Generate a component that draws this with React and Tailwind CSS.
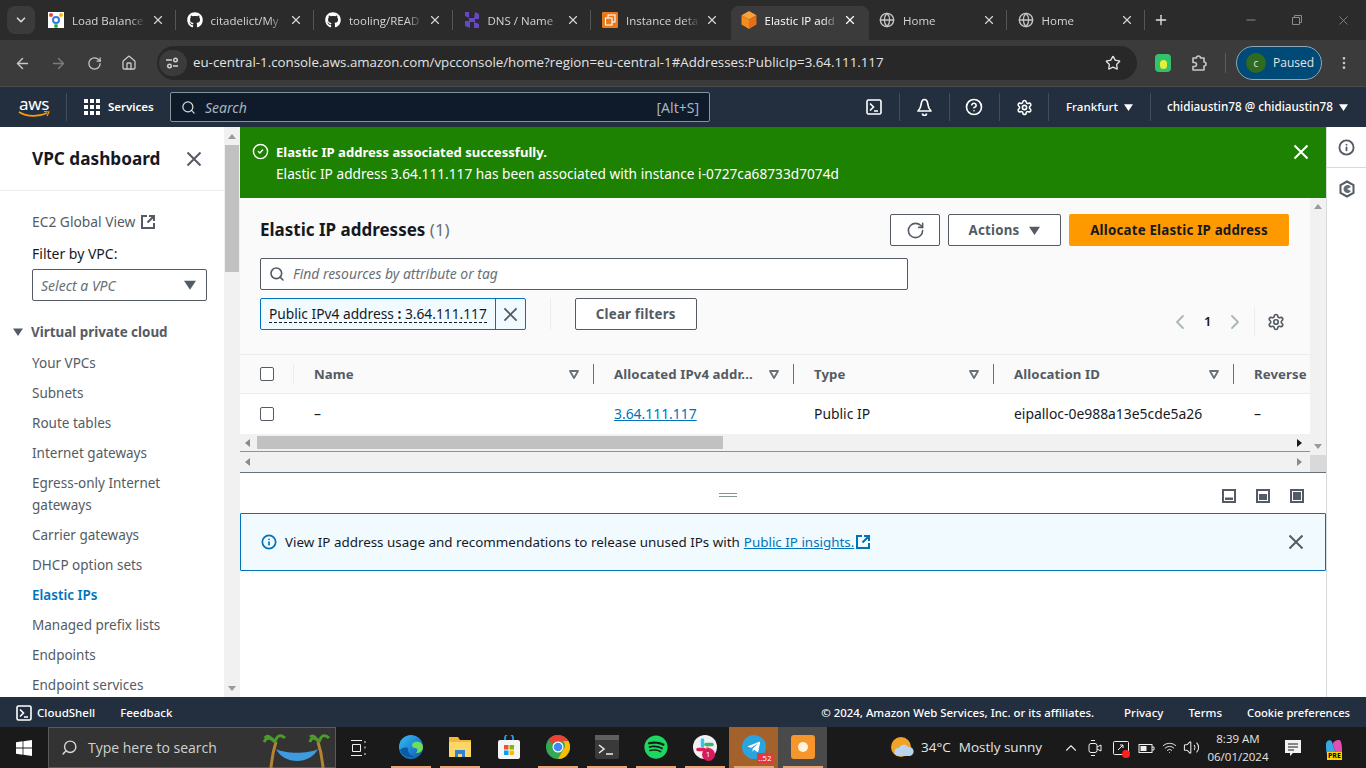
import React from "react"
import {
  ArrowLeft,
  ArrowRight,
  RotateCw,
  Home,
  Star,
  EllipsisVertical,
  Search,
  Settings,
  CircleHelp,
  X,
  Plus,
  Minus,
  Info,
  CircleCheck,
  ChevronLeft,
  ChevronRight,
  ChevronUp,
  ChevronDown,
  Globe,
  Wifi,
  Volume2,
} from "lucide-react"
import { FaGithub, FaSpotify, FaTelegramPlane } from "react-icons/fa"

const sans = "font-['Noto_Sans','Open_Sans',sans-serif]"
const ui = "font-['Open_Sans','Noto_Sans',sans-serif]"

const Caret = ({ className = "", size = 10 }) => (
  <svg width={size} height={size} viewBox="0 0 10 10" className={className}>
    <path d="M0 1.5h10L5 9z" fill="currentColor" />
  </svg>
)

const FilterCaret = () => (
  <svg width="10" height="9" viewBox="0 0 10 9" className="text-[#687078]">
    <path d="M1 1h8L5 8z" fill="none" stroke="currentColor" strokeWidth="1.8" strokeLinejoin="round" />
  </svg>
)

// AWS close glyph, bigger and squarer than the lucide one
const CloseX = ({ className = "", size = 16 }) => (
  <svg width={size} height={size} viewBox="0 0 16 16" fill="none" stroke="currentColor" strokeWidth="2" className={className}>
    <path d="M1.500 1.500l13 13M14.500 1.500l-13 13" />
  </svg>
)

const TerminalBox = ({ size = 16 }) => (
  <svg width={size} height={size} viewBox="0 0 16 16" fill="none" stroke="currentColor" strokeWidth="1.6">
    <rect x="1" y="1" width="14" height="14" rx="1.6" />
    <path d="M4 4.500 7.500 8 4 11.500M8 12h4" />
  </svg>
)

const ExternalBox = ({ className = "" }) => (
  <svg width="14" height="14" viewBox="0 0 14 14" fill="none" stroke="currentColor" strokeWidth="2" className={className}>
    <path d="M6 1H1v12h12V8M8 1h5v5M13 1 6.500 7.500" />
  </svg>
)

const PanelIcon = ({ fill }) => (
  <svg width="14" height="14" viewBox="0 0 14 14">
    <rect x="1" y="1" width="12" height="12" fill="none" stroke="#545b64" strokeWidth="2" />
    <path d={fill} fill="#545b64" />
  </svg>
)

const CubeIcon = () => (
  <svg width="16" height="18" viewBox="0 0 16 18">
    <path d="M8 0 15.500 4.200 8 8.600.5 4.200z" fill="#f9a13a" />
    <path d="M.5 4.200 8 8.600V18L.5 13.600z" fill="#f58a1f" />
    <path d="M15.500 4.200 8 8.600V18l7.500-4.400z" fill="#e2701a" />
  </svg>
)

const InstanceIcon = () => (
  <svg width="16" height="16" viewBox="0 0 16 16">
    <rect width="16" height="16" rx="1" fill="#e8791c" />
    <rect x="6" y="3" width="7" height="7" fill="none" stroke="#fff" strokeWidth="1.1" />
    <rect x="3.500" y="6" width="6.500" height="7" fill="#e8791c" stroke="#fff" strokeWidth="1.1" />
  </svg>
)

const LoadBalancerIcon = () => (
  <svg width="16" height="16" viewBox="0 0 16 16">
    <rect width="16" height="16" fill="#fff" />
    <circle cx="8" cy="8" r="3" fill="none" stroke="#2f7de1" strokeWidth="2" />
    <circle cx="3" cy="3" r="2" fill="#ea4335" />
    <circle cx="13" cy="3" r="2" fill="#fbbc04" />
    <circle cx="8" cy="14" r="2" fill="#34a853" />
  </svg>
)

const HostingerIcon = () => (
  <svg width="16" height="16" viewBox="0 0 16 16" fill="#6747c7">
    <path d="M1 0h4v6L1 4zM11 0l4 2v5h-5zM1 9h5v7L1 14zM10 10l5 2v4h-5z" />
    <path d="M5 6h6v4H5z" />
  </svg>
)

const tabs = [
  { title: "Load Balance", icon: <LoadBalancerIcon />, sep: true },
  { title: "citadelict/My", icon: <FaGithub size={16} className="text-white" />, sep: true },
  { title: "tooling/READ", icon: <FaGithub size={16} className="text-white" />, sep: true },
  { title: "DNS / Name", icon: <HostingerIcon />, sep: true },
  { title: "Instance deta", icon: <InstanceIcon /> },
  { title: "Elastic IP add", icon: <CubeIcon />, active: true },
  { title: "Home", icon: <Globe size={16} className="text-[#c4c7c5]" />, sep: true },
  { title: "Home", icon: <Globe size={16} className="text-[#c4c7c5]" />, sep: true },
]

const TabStrip = () => (
  <div className={`flex h-10 shrink-0 items-center bg-[#2b2b2b] text-[11.5px] text-[#d5d5d5] ${ui}`}>
    <div className="ml-[7px] mr-[3px] flex h-7 w-7 items-center justify-center rounded-lg bg-[#3b3b3b]">
      <ChevronDown size={14} strokeWidth={3} />
    </div>
    {tabs.map((tab, i) => (
      <div
        key={i}
        className={`flex h-[34px] w-[138.5px] shrink-0 items-center self-end rounded-t-lg pb-[6px] pl-[10px] pr-[1px] ${
          tab.active ? "bg-[#3b3b3b] text-white" : ""
        }`}
      >
        <span className="flex w-4 shrink-0 justify-center">{tab.icon}</span>
        <span className="ml-2 h-[17px] w-[74px] overflow-hidden whitespace-nowrap leading-[17px] [mask-image:linear-gradient(90deg,#000_78%,transparent)]">
          {tab.title}
        </span>
        <X size={14} className="ml-auto" strokeWidth={2} />
        <span className={`ml-[10px] h-5 w-px ${tab.sep ? "bg-[#555555]" : ""}`} />
      </div>
    ))}
    <Plus size={16} className="ml-[7px] text-[#e3e3e3]" strokeWidth={2} />
    <Minus size={14} className="ml-[75px] text-[#8a8a8a]" />
    <svg width="12" height="12" viewBox="0 0 12 12" fill="none" stroke="#8a8a8a" className="ml-[33px]">
      <path d="M1.500 3.500h7v7h-7zM3.500 3.500v-2h7v7h-2" />
    </svg>
    <X size={15} className="ml-[33px] text-[#8a8a8a]" strokeWidth={1.4} />
  </div>
)

const Toolbar = () => (
  <div className={`flex h-[47px] shrink-0 items-center border-b border-[#4a4a4a] bg-[#3b3b3b] text-[#c7c7c7] ${ui}`}>
    <ArrowLeft size={17} className="ml-[14px]" />
    <ArrowRight size={17} className="ml-[19px] text-[#7c7c7c]" />
    <RotateCw size={15} className="ml-[20px]" />
    <Home size={16} className="ml-[19px]" />
    <div className="ml-[20px] flex h-[34px] w-[980px] items-center rounded-full bg-[#282828]">
      <div className="ml-[2px] flex h-[26px] w-[28px] items-center justify-center rounded-full bg-[#3b3b3b]">
        <svg width="14" height="12" viewBox="0 0 14 12" fill="none" stroke="#d5d5d5" strokeWidth="1.4">
          <path d="M0 3h6M12 9H7" />
          <circle cx="9.500" cy="3" r="1.800" />
          <circle cx="3.500" cy="9" r="1.800" />
        </svg>
      </div>
      <span className="ml-[6px] whitespace-nowrap text-[13.3px] text-[#e3e3e3]">
        eu-central-1.console.aws.amazon.com/vpcconsole/home?region=eu-central-1#Addresses:PublicIp=3.64.111.117
      </span>
      <Star size={16} className="ml-auto mr-4 text-[#e3e3e3]" />
    </div>
    <div className="ml-[18px] flex h-[18px] w-4 items-end justify-center rounded-sm bg-[#32c26b]">
      <span className="mb-[3px] h-[9px] w-[7px] rounded-full bg-[#e6ee3a]" />
    </div>
    <svg width="17" height="17" viewBox="0 0 17 17" fill="none" stroke="currentColor" strokeWidth="1.6" className="ml-[20px]">
      <path d="M2 3h3.500a2 2 0 0 1 4 0H13v4a2 2 0 0 1 0 4v4H2v-3.500h1.500a2 2 0 0 0 0-4H2z" strokeLinejoin="round" />
    </svg>
    <span className="ml-[17px] h-5 w-px bg-[#5c5c5c]" />
    <div className="ml-[10px] flex h-[34px] w-[86px] items-center rounded-full border border-[#8ea6b8] bg-[#004a77] text-[12px] text-[#e3e3e3]">
      <span className="ml-[9px] flex h-5 w-5 items-center justify-center rounded-full bg-[#2f6b1f] text-[10px]">c</span>
      <span className="ml-[7px]">Paused</span>
    </div>
    <EllipsisVertical size={16} className="ml-[14px]" />
  </div>
)

const NavDivider = ({ className = "" }) => <span className={`h-7 w-px shrink-0 bg-[#414d5c] ${className}`} />

const AwsNav = () => (
  <div className={`flex h-10 shrink-0 items-center bg-[#232f3e] text-[12px] text-white ${sans}`}>
    <div className="ml-[18px] flex w-8 flex-col items-center">
      <span className="text-[17px] leading-[14px] tracking-tight">aws</span>
      <svg width="32" height="7" viewBox="0 0 32 7" fill="none">
        <path d="M1 1c8 5 20 5 28 1" stroke="#f90" strokeWidth="1.6" />
        <path d="M26 .5 31 1l-2 4" stroke="#f90" strokeWidth="1.2" />
      </svg>
    </div>
    <NavDivider className="ml-4" />
    <div className="ml-[17px] grid grid-cols-3 gap-[2px]">
      {[...Array(9)].map((_, i) => (
        <span key={i} className="h-[4px] w-[4px] bg-white" />
      ))}
    </div>
    <span className="ml-2 w-[45px] whitespace-nowrap text-[11.5px] font-semibold">Services</span>
    <div className="ml-[17px] flex h-[30px] w-[540px] items-center rounded-[2px] border border-[#879596] bg-[#0f1b2a] text-[#a9b4bd]">
      <Search size={15} className="ml-[10px] text-[#d5dbdb]" />
      <span className="ml-[9px] text-[14px] italic">Search</span>
      <span className="ml-auto mr-[10px] text-[14px]">[Alt+S]</span>
    </div>
    <span className="ml-[156px] text-white"><TerminalBox /></span>
    <NavDivider className="ml-[17px]" />
    <svg width="17" height="18" viewBox="0 0 17 18" fill="none" stroke="currentColor" strokeWidth="1.7" className="ml-4" strokeLinejoin="round">
      <path d="M8.500 1.500c2 0 3 2 3.300 4.500.3 3 1.200 5 3.200 7H2c2-2 2.900-4 3.200-7 .3-2.500 1.300-4.500 3.300-4.500z" />
      <path d="M6.500 15.500a2 2 0 0 0 4 0" />
    </svg>
    <NavDivider className="ml-4" />
    <CircleHelp size={18} className="ml-[15px]" strokeWidth={2.2} />
    <NavDivider className="ml-4" />
    <Settings size={17} className="ml-4" strokeWidth={2.2} />
    <NavDivider className="ml-[15px]" />
    <span className="ml-[17px] w-[52px] whitespace-nowrap text-[11.6px] font-medium">Frankfurt</span>
    <Caret size={9} className="ml-[6px]" />
    <NavDivider className="ml-[17px]" />
    <span className="ml-4 w-[166px] whitespace-nowrap text-[11.7px] font-medium">chidiaustin78 @ chidiaustin78</span>
    <Caret size={9} className="ml-[6px]" />
  </div>
)

const navItems = [
  "Your VPCs",
  "Subnets",
  "Route tables",
  "Internet gateways",
  "Egress-only Internet gateways",
  "Carrier gateways",
  "DHCP option sets",
  "Elastic IPs",
  "Managed prefix lists",
  "Endpoints",
  "Endpoint services",
]

const ScrollArrow = ({ dir }) => (
  <svg width="8" height="5" viewBox="0 0 8 5" className="text-[#9a9a9a]">
    <path d={dir === "up" ? "M0 5h8L4 0z" : "M0 0h8L4 5z"} fill="currentColor" />
  </svg>
)

const Sidebar = () => (
  <div className="flex w-[240px] shrink-0">
    <div className={`h-full w-[224px] overflow-hidden bg-white text-[13.5px] text-[#545b64] ${sans}`}>
      <div className="flex h-[64px] items-center justify-between border-b border-[#eaeded] pl-8 pr-[22px]">
        <span className="text-[17.2px] font-bold text-[#16191f]">VPC dashboard</span>
        <CloseX className="text-[#545b64]" />
      </div>
      <div className="mt-[21px] flex items-center gap-[6px] pl-8 text-[13.8px] leading-5">
        EC2 Global View <ExternalBox />
      </div>
      <div className="mt-3 pl-8 text-[14px] leading-5 text-[#16191f]">Filter by VPC:</div>
      <div className="ml-8 mt-[5px] flex h-[32px] w-[175px] items-center justify-between rounded-[2px] border border-[#545b64] pl-2 pr-[10px] text-[14px] italic text-[#687078]">
        Select a VPC
        <Caret size={12} className="text-[#545b64]" />
      </div>
      <div className="mt-[21px] flex items-center pl-[13px] text-[13.4px] font-bold leading-5">
        <Caret size={10} />
        <span className="ml-2">Virtual private cloud</span>
      </div>
      <ul className="mt-[10px] flex flex-col gap-2 pl-8 pr-3 leading-[22px]">
        {navItems.map((item) => (
          <li key={item} className={item === "Elastic IPs" ? "font-semibold text-[#0073bb]" : ""}>
            {item}
          </li>
        ))}
      </ul>
    </div>
    <div className="flex h-full w-4 flex-col items-center bg-[#f1f1f1]">
      <div className="flex h-[18px] shrink-0 items-center"><ScrollArrow dir="up" /></div>
      <div className="h-[127px] w-full shrink-0 border-x border-[#f1f1f1] bg-[#c1c1c1]" />
      <div className="mt-auto flex h-[18px] items-center"><ScrollArrow dir="down" /></div>
    </div>
  </div>
)

const Banner = () => (
  <div className={`flex h-[71px] shrink-0 items-start bg-[#1d8102] pl-3 pr-[17px] pt-[14px] text-white ${sans}`}>
    <CircleCheck size={17} className="mt-[2px]" strokeWidth={2} />
    <div className="ml-[7px] flex-1 leading-[22px]">
      <div className="text-[13.1px] font-bold">Elastic IP address associated successfully.</div>
      <div className="text-[13.7px]">Elastic IP address 3.64.111.117 has been associated with instance i-0727ca68733d7074d</div>
    </div>
    <CloseX className="mt-[3px] text-white" />
  </div>
)

const OutlineButton = ({ className = "", children }) => (
  <div className={`flex h-[32px] items-center justify-center rounded-[2px] border border-[#545b64] bg-white pt-[1px] text-[13.300px] font-bold tracking-[0.2px] text-[#545b64] ${className}`}>
    {children}
  </div>
)

const columns = [
  { title: "Name", value: "–", width: "w-[300px]" },
  { title: "Allocated IPv4 addr...", value: "3.64.111.117", link: true, width: "w-[200px]" },
  { title: "Type", value: "Public IP", width: "w-[200px]" },
  { title: "Allocation ID", value: "eipalloc-0e988a13e5cde5a26", width: "w-[240px]" },
  { title: "Reverse", value: "–", width: "w-[200px]", last: true },
]

const Checkbox = () => <span className="h-[14px] w-[14px] rounded-[2px] border border-[#545b64] bg-white" />

const Table = () => (
  <div className="overflow-hidden">
    <div className="mt-6 flex h-[40px] w-[1194px] items-center border-y border-[#eaeded] bg-[#fafafa] text-[13.2px] font-bold tracking-[0.1px] text-[#545b64]">
      <div className="flex h-5 w-[54px] shrink-0 items-center border-r border-[#eaeded] pl-5">
        <Checkbox />
      </div>
      {columns.map((col) => (
        <div
          key={col.title}
          className={`flex h-5 shrink-0 items-center pl-5 pr-[14px] ${col.width} ${col.last ? "" : "border-r border-[#687078]"}`}
        >
          <span className="whitespace-nowrap pt-[2px]">{col.title}</span>
          {col.last ? null : <span className="ml-auto flex"><FilterCaret /></span>}
        </div>
      ))}
    </div>
    <div className="flex h-[40px] w-[1194px] items-center bg-white text-[13.9px] text-[#16191f]">
      <div className="flex h-full w-[54px] shrink-0 items-center pl-5">
        <Checkbox />
      </div>
      {columns.map((col) => (
        <div key={col.title} className={`shrink-0 pl-5 ${col.width} ${col.link ? "text-[#0073bb] underline" : ""}`}>
          {col.value}
        </div>
      ))}
    </div>
  </div>
)

const HScroll = ({ thumb }) => (
  <div className={`flex shrink-0 items-center bg-[#f1f1f1] pl-[5px] pr-[8px] ${thumb ? "h-[17px]" : "h-[20px]"}`}>
    <svg width="5" height="8" viewBox="0 0 5 8" className="text-[#8a8a8a]"><path d="M5 0v8L0 4z" fill="currentColor" /></svg>
    {thumb ? <div className="ml-[7px] h-[13px] w-[466px] bg-[#c1c1c1]" /> : null}
    <svg width="5" height="8" viewBox="0 0 5 8" className={`ml-auto ${thumb ? "text-[#16191f]" : "text-[#8a8a8a]"}`}><path d="M0 0v8l5-4z" fill="currentColor" /></svg>
  </div>
)

const Panel = () => (
  <div className="flex h-[275px] shrink-0 border-b border-[#687078] bg-[#fafafa]">
    <div className={`flex w-[1070px] shrink-0 flex-col ${sans}`}>
      <div className="min-h-0 flex-1 overflow-hidden">
        <div className="px-5 pt-4">
          <div className="flex items-center">
            <h1 className="text-[17px] font-bold leading-[30px] text-[#16191f]">
              Elastic IP addresses <span className="font-normal text-[#687078]">(1)</span>
            </h1>
            <OutlineButton className="ml-auto w-[50px]">
              <RotateCw size={19} strokeWidth={2} />
            </OutlineButton>
            <OutlineButton className="ml-2 w-[113px]">
              Actions
              <Caret size={11} className="ml-[10px]" />
            </OutlineButton>
            <div className="ml-2 mr-[1px] flex h-[32px] w-[220px] items-center justify-center rounded-[2px] bg-[#ff9900] pt-[1px] text-[13.300px] font-bold tracking-[0.2px] text-[#16191f]">
              Allocate Elastic IP address
            </div>
          </div>
          <div className="mt-3 flex h-[32px] w-[648px] items-center rounded-[2px] border border-[#545b64] bg-white text-[13.9px] italic text-[#687078]">
            <Search size={16} className="ml-2 text-[#545b64]" strokeWidth={2.4} />
            <span className="ml-2">Find resources by attribute or tag</span>
          </div>
          <div className="mt-2 flex h-[32px] items-center">
            <div className="flex h-full rounded-[2px] border border-[#0073bb] bg-[#f1faff] text-[13.75px] text-[#16191f]">
              <div className="flex items-center px-2">
                <span className="border-b border-dashed border-[#16191f] leading-[17px]">
                  Public IPv4 address <b>:</b> 3.64.111.117
                </span>
              </div>
              <div className="flex w-[30px] items-center justify-center border-l border-[#0073bb]">
                <CloseX size={15} className="text-[#545b64]" />
              </div>
            </div>
            <span className="ml-6 h-full w-px bg-[#eaeded]" />
            <OutlineButton className="ml-6 w-[122px]">Clear filters</OutlineButton>
            <div className="ml-auto mt-4 flex h-[30px] items-center">
              <ChevronLeft size={24} className="text-[#aab7b8]" strokeWidth={1.8} />
              <span className="ml-3 w-2 text-[13px] font-semibold text-[#16191f]">1</span>
              <ChevronRight size={24} className="ml-[11px] text-[#aab7b8]" strokeWidth={1.8} />
              <span className="ml-[7px] h-full w-px bg-[#eaeded]" />
              <Settings size={18} className="ml-3 mr-[5px] text-[#545b64]" strokeWidth={2.2} />
            </div>
          </div>
        </div>
        <Table />
      </div>
      <HScroll thumb />
      <div className="h-px shrink-0 bg-[#879596]" />
      <HScroll />
    </div>
    <div className="flex w-4 shrink-0 flex-col items-center bg-[#f1f1f1]">
      <div className="flex h-4 items-center"><ScrollArrow dir="up" /></div>
      <div className="mb-[2px] mt-auto flex h-[14px] items-center"><ScrollArrow dir="down" /></div>
      <div className="h-[17px] w-full bg-[#d9d9d9]" />
    </div>
  </div>
)

const SplitHeader = () => (
  <div className="flex h-[40px] shrink-0 items-center bg-white pt-[4px]">
    <div className="ml-[479px] flex flex-col gap-[2px]">
      <span className="h-px w-[18px] bg-[#879596]" />
      <span className="h-px w-[18px] bg-[#879596]" />
    </div>
    <div className="ml-auto mr-[22px] mt-[2px] flex gap-[20px]">
      <PanelIcon fill="M3 8.500h8V11H3z" />
      <PanelIcon fill="M3 5h8v6H3z" />
      <PanelIcon fill="M3 3h8v8H3z" />
    </div>
  </div>
)

const InfoAlert = () => (
  <div className={`flex h-[58px] shrink-0 items-center rounded-[1px] border border-[#0073bb] bg-[#f1faff] pl-5 pr-[21px] text-[13.4px] text-[#16191f] ${sans}`}>
    <Info size={16} className="text-[#0073bb]" strokeWidth={2.6} />
    <span className="ml-2">View IP address usage and recommendations to release unused IPs with</span>
    <span className="ml-1 text-[#0073bb] underline">Public IP insights.</span>
    <ExternalBox className="ml-[2px] text-[#0073bb]" />
    <CloseX className="ml-auto text-[#545b64]" />
  </div>
)

const RightRail = () => (
  <div className="flex w-10 shrink-0 flex-col items-center border-l border-[#d5dbdb] bg-white text-[#545b64]">
    <div className="flex h-[41px] w-full items-center justify-center border-b border-[#d5dbdb]">
      <Info size={17} strokeWidth={2.6} />
    </div>
    <svg width="16" height="18" viewBox="0 0 16 18" className="mt-[12px]" fill="none" stroke="currentColor" strokeWidth="2">
      <path d="M8 1.500 14.500 5v8L8 16.500 1.500 13V5z" />
      <path d="M8 9 12 7a4 4 0 1 0 0 4z" fill="currentColor" stroke="none" opacity="0.9" />
    </svg>
  </div>
)

const Footer = () => (
  <div className={`flex h-[30px] shrink-0 items-center bg-[#232f3e] pt-[2px] text-[11.5px] font-medium text-white ${sans}`}>
    <span className="ml-4"><TerminalBox /></span>
    <span className="ml-[5px]">CloudShell</span>
    <span className="ml-[25px]">Feedback</span>
    <span className="ml-auto text-[11.4px]">© 2024, Amazon Web Services, Inc. or its affiliates.</span>
    <span className="ml-[30px]">Privacy</span>
    <span className="ml-[25px]">Terms</span>
    <span className="ml-[25px] mr-4 text-[11.2px]">Cookie preferences</span>
  </div>
)

const EdgeIcon = () => (
  <svg width="24" height="24" viewBox="0 0 24 24">
    <defs>
      <linearGradient id="edge" x1="0" y1="0" x2="1" y2="1">
        <stop offset="0" stopColor="#35c1f1" />
        <stop offset="0.6" stopColor="#1b7fd0" />
        <stop offset="1" stopColor="#0c59a4" />
      </linearGradient>
    </defs>
    <circle cx="12" cy="12" r="12" fill="url(#edge)" />
    <path d="M24 12c0-4-4-6-8-5-4 1-4 6 0 6 3 0 3 3 1 5 4 0 7-2 7-6z" fill="#6fdc5a" />
    <path d="M9 14c0 5 4 8 8 7-6 3-14 1-16-6 3-3 8-3 8-1z" fill="#0c59a4" />
  </svg>
)

const FolderIcon = () => (
  <svg width="24" height="22" viewBox="0 0 24 22">
    <path d="M1 1h9l2 3h11v17H1z" fill="#f0b93a" />
    <path d="M1 6h22v15H1z" fill="#fcd666" />
    <path d="M7 21v-7h10v7h-3v-3h-4v3z" fill="#2f82d6" />
  </svg>
)

const StoreIcon = () => (
  <svg width="22" height="24" viewBox="0 0 22 24">
    <path d="M7 6V3a4 4 0 0 1 8 0v3" fill="none" stroke="#1aa3e8" strokeWidth="1.8" />
    <rect x="0" y="5" width="22" height="19" rx="2" fill="#f4f4f4" />
    <rect x="6" y="10" width="4.500" height="4.500" fill="#f25022" />
    <rect x="11.500" y="10" width="4.500" height="4.500" fill="#7fba00" />
    <rect x="6" y="15.500" width="4.500" height="4.500" fill="#00a4ef" />
    <rect x="11.500" y="15.500" width="4.500" height="4.500" fill="#ffb900" />
  </svg>
)

const ChromeIcon = () => (
  <svg width="24" height="24" viewBox="0 0 24 24">
    <circle cx="12" cy="12" r="12" fill="#34a853" />
    <path d="M12 0a12 12 0 0 1 10.400 6H12a6 6 0 0 0-5.400 3.400L2.300 4.600A12 12 0 0 1 12 0z" fill="#ea4335" />
    <path d="M22.400 6A12 12 0 0 1 12 24l5-9a6 6 0 0 0 0-9z" fill="#fbbc04" />
    <circle cx="12" cy="12" r="5.500" fill="#fff" />
    <circle cx="12" cy="12" r="4.300" fill="#4285f4" />
  </svg>
)

const ConsoleIcon = () => (
  <div className="flex h-[24px] w-[24px] flex-col rounded-[2px] bg-[#3a3a3a]">
    <div className="h-[5px] bg-[#5e5e5e]" />
    <svg width="24" height="19" viewBox="0 0 24 19" fill="none" stroke="#eee" strokeWidth="1.5">
      <path d="M4 5l5 4-5 4M11 14h7" />
    </svg>
  </div>
)

const SlackIcon = () => (
  <div className="relative">
    <svg width="24" height="24" viewBox="0 0 24 24">
      <circle cx="12" cy="12" r="12" fill="#f2f2f2" />
      <g strokeWidth="3.500" strokeLinecap="round">
        <path d="M9.500 5v6" stroke="#36c5f0" />
        <path d="M13 9.500h6" stroke="#2eb67d" />
        <path d="M14.500 13v6" stroke="#ecb22e" />
        <path d="M5 14.500h6" stroke="#e01e5a" />
      </g>
    </svg>
    <span className="absolute -bottom-[2px] right-[2px] flex h-[13px] w-[13px] items-center justify-center rounded-full bg-[#d81b60] text-[8px] text-white">1</span>
  </div>
)

const TelegramIcon = () => (
  <div className="relative flex h-[24px] w-[24px] items-center justify-center rounded-full bg-[#2aa4de]">
    <FaTelegramPlane size={14} className="text-white" />
    <span className="absolute -bottom-[4px] -right-[7px] bg-[#e5383b] px-[1px] text-[8px] leading-[10px] text-white">..52</span>
  </div>
)

const CaptureIcon = () => (
  <div className="flex h-[24px] w-[24px] items-center justify-center rounded-[3px] bg-[#f5962a]">
    <span className="h-[10px] w-[10px] rounded-full bg-[#fff3dc]" />
  </div>
)

const TaskApp = ({ children, open, highlight }) => (
  <div className={`flex h-full w-[49px] shrink-0 flex-col items-center ${highlight || ""}`}>
    <div className="flex flex-1 items-center justify-center">{children}</div>
    <div className={`h-[2px] w-[40px] ${open ? "bg-[#e8a677]" : ""}`} />
  </div>
)

const Taskbar = () => (
  <div className={`flex h-[41px] shrink-0 items-center bg-[#1a1a1a] text-[#e6e6e6] ${ui}`}>
    <svg width="16" height="16" viewBox="0 0 16 16" className="ml-4 fill-white">
      <path d="M0 2.200 6.600 1.300v6.300H0zM7.400 1.200 16 0v7.600H7.400zM0 8.400h6.600v6.300L0 13.800zM7.400 8.400H16V16l-8.600-1.200z" />
    </svg>
    <div className="ml-4 flex h-full w-[288px] items-center border border-[#5a5a5a] bg-[#333333]">
      <Search size={17} className="ml-[12px] -scale-x-100 text-[#d6d6d6]" />
      <span className="ml-[10px] text-[14px] text-[#d0d0d0]">Type here to search</span>
      <svg width="70" height="40" viewBox="0 0 70 40" className="ml-auto mr-1">
        <path d="M10 40c1-12 3-20 5-26M62 40c-1-12-3-20-5-26" stroke="#b58332" strokeWidth="3" fill="none" />
        <path d="M14 14C8 8 5 10 3 14M14 14c2-7 6-8 10-4M14 14c-3-4-8-8-10-4" stroke="#4c9a2a" strokeWidth="3" fill="none" />
        <path d="M58 14c-5-6-8-4-9 0M58 14c2-7 6-8 10-4M58 14c-3-4-6-8-9-5" stroke="#4c9a2a" strokeWidth="3" fill="none" />
        <path d="M15 21c8 16 34 16 42 0-10 5-32 5-42 0z" fill="#3f9be0" />
      </svg>
    </div>
    <svg width="18" height="16" viewBox="0 0 18 16" fill="none" stroke="#eee" className="ml-[14px]">
      <path d="M1 .5h11M1 15.500h11M2.500 4.500h8v7h-8zM15 1v2M15 6.500v2M15 13v2" />
    </svg>
    <div className="ml-[18px] flex h-full items-center">
      <TaskApp open><EdgeIcon /></TaskApp>
      <TaskApp open><FolderIcon /></TaskApp>
      <TaskApp><StoreIcon /></TaskApp>
      <TaskApp open><ChromeIcon /></TaskApp>
      <TaskApp open><ConsoleIcon /></TaskApp>
      <TaskApp open><FaSpotify size={24} className="text-[#1ed760]" /></TaskApp>
      <TaskApp open><SlackIcon /></TaskApp>
      <TaskApp open highlight="bg-[#a3622b]"><TelegramIcon /></TaskApp>
      <TaskApp open highlight="bg-[#4a4a4a]"><CaptureIcon /></TaskApp>
    </div>
    <svg width="24" height="24" viewBox="0 0 24 24" className="ml-[63px]">
      <circle cx="11" cy="11" r="10" fill="#f2a227" />
      <path d="M8 20a4 4 0 0 1 1-8 5 5 0 0 1 9-1 4.500 4.500 0 0 1 2 9z" fill="#b9d4ee" />
    </svg>
    <span className="ml-[7px] whitespace-nowrap text-[13.5px]">34°C</span>
    <span className="ml-2 whitespace-nowrap text-[13.5px]">Mostly sunny</span>
    <ChevronUp size={18} className="ml-[20px]" strokeWidth={1.5} />
    <svg width="14" height="18" viewBox="0 0 14 18" fill="none" stroke="#eee" className="ml-[8px]">
      <rect x="1" y="4.500" width="8" height="9" rx="2" /><path d="M9 8l4-2v6l-4-2M3 1.500h4M3 16.500h4" />
    </svg>
    <div className="relative ml-[10px]">
      <svg width="18" height="18" viewBox="0 0 18 18" fill="none" stroke="#eee">
        <rect x="1.500" y="2.500" width="15" height="13" rx="1" /><path d="M6 11l5-5M8 6h3v3" />
      </svg>
      <span className="absolute -bottom-[1px] right-0 h-[8px] w-[8px] rounded-full bg-[#ff1f1f]" />
    </div>
    <svg width="18" height="14" viewBox="0 0 18 14" fill="none" stroke="#eee" className="ml-[7px]">
      <rect x="2" y="3.500" width="13" height="8" /><path d="M15 6h2v3h-2" /><rect x="4" y="5.500" width="5" height="4" fill="#eee" />
    </svg>
    <Wifi size={15} className="ml-[7px]" strokeWidth={1.5} />
    <Volume2 size={17} className="ml-[6px]" strokeWidth={1.5} />
    <div className="ml-[5px] flex w-[66px] flex-col items-center text-[11.5px] leading-[18px]">
      <span>8:39 AM</span>
      <span>06/01/2024</span>
    </div>
    <svg width="18" height="18" viewBox="0 0 18 18" className="ml-[13px]">
      <path d="M1 1h16v13H9l-3 3v-3H1z" fill="#f2f2f2" />
      <path d="M4 5h10M4 8h10M4 11h6" stroke="#1a1a1a" />
    </svg>
    <div className="relative ml-[22px]">
      <svg width="20" height="20" viewBox="0 0 20 20">
        <path d="M2 6c0-4 5-5 6-2l3 9c1 3-3 5-6 5s-3-8-3-12z" fill="#37a7e8" />
        <path d="M18 14c0 4-5 5-6 2L9 7c-1-3 3-5 6-5s3 8 3 12z" fill="#e04fb5" />
      </svg>
      <span className="absolute -bottom-[2px] left-[3px] bg-[#ffd400] px-[1px] text-[7px] font-bold leading-[8px] text-black">PRE</span>
    </div>
  </div>
)

export default function App() {
  return (
    <div className="flex h-[768px] w-[1366px] flex-col overflow-hidden bg-white">
      <TabStrip />
      <Toolbar />
      <AwsNav />
      <div className="flex min-h-0 flex-1">
        <Sidebar />
        <div className="flex min-w-0 flex-1 flex-col">
          <Banner />
          <Panel />
          <SplitHeader />
          <InfoAlert />
        </div>
        <RightRail />
      </div>
      <Footer />
      <Taskbar />
    </div>
  )
}
